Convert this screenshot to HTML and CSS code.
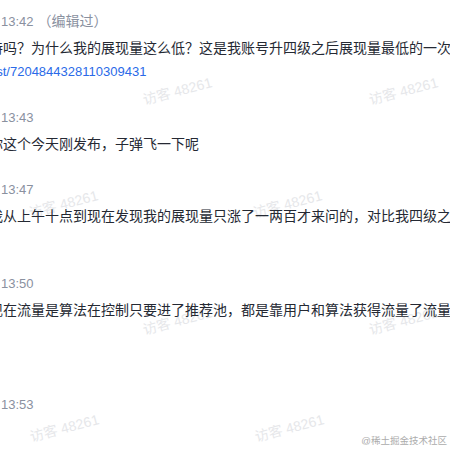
FILE: index.html
```html
<!DOCTYPE html>
<html>
<head>
    <meta charset="UTF-8">
    <meta name="viewport" content="width=device-width, initial-scale=1.0">
    <title>评论</title>
    <link rel="stylesheet" href="styles.css">
</head>
<body>
    <div class="watermarks">
        <span class="mark mark-a">访客 48261</span>
        <span class="mark mark-b">访客 48261</span>
        <span class="mark mark-c">访客 48261</span>
        <span class="mark mark-d">访客 48261</span>
        <span class="mark mark-e">访客 48261</span>
        <span class="mark mark-f">访客 48261</span>
        <span class="mark mark-g">访客 48261</span>
        <span class="mark mark-h">访客 48261</span>
    </div>

    <div class="thread">
        <div class="msg">
            <div class="msg-time">13:42<span class="edited">（编辑过）</span></div>
            <div class="msg-text">特吗？为什么我的展现量这么低？这是我账号升四级之后展现量最低的一次 <a class="link" href="#">https://juejin.cn/post/7204844328110309431</a></div>
        </div>

        <div class="msg">
            <div class="msg-time">13:43</div>
            <div class="msg-text">你这个今天刚发布，子弹飞一下呢</div>
        </div>

        <div class="msg">
            <div class="msg-time">13:47</div>
            <div class="msg-text">我从上午十点到现在发现我的展现量只涨了一两百才来问的，对比我四级之前的数据</div>
        </div>

        <div class="msg msg-gap-1">
            <div class="msg-time">13:50</div>
            <div class="msg-text">现在流量是算法在控制只要进了推荐池，都是靠用户和算法获得流量了流量就会高</div>
        </div>

        <div class="msg msg-gap-2">
            <div class="msg-time">13:53</div>
        </div>
    </div>

    <div class="site-mark">@稀土掘金技术社区</div>
</body>
</html>
```

FILE: styles.css
```css
html, body {
    overflow: hidden;
}
body {
    margin: 0;
    height: 450px;
    background: #fff;
    color: #252933;
    font-family: "Liberation Sans", "Noto Sans CJK SC", sans-serif;
    font-size: 14px;
}
.thread {
    position: relative;
    width: 566px;
    margin-left: -11px;
    padding-top: 11px;
}
.msg {
    margin-top: 25px;
}
.msg:first-child {
    margin-top: 0;
}
.msg-gap-1 {
    margin-top: 47px;
}
.msg-gap-2 {
    margin-top: 74px;
}
.msg-time {
    padding-left: 12px;
    line-height: 20px;
    font-size: 13px;
    color: #8a919f;
}
.edited {
    margin-left: 4px;
    font-size: 14px;
}
.msg-text {
    margin-top: 5px;
    line-height: 22px;
    word-break: break-all;
}
.link {
    font-size: 13px;
    color: #2a6ae8;
    text-decoration: none;
}

/* watermark layer */
.watermarks {
    position: absolute;
    top: 0;
    left: 0;
    width: 450px;
    height: 450px;
    pointer-events: none;
}
.mark {
    position: absolute;
    line-height: 20px;
    white-space: nowrap;
    font-size: 14px;
    color: #e6e7ea;
    transform: rotate(-15deg);
}
.mark-a { left: 142px; top: 81px; }
.mark-b { left: 368px; top: 81px; }
.mark-c { left: 28px; top: 194px; }
.mark-d { left: 252px; top: 194px; }
.mark-e { left: 142px; top: 311px; }
.mark-f { left: 368px; top: 311px; }
.mark-g { left: 29px; top: 418px; }
.mark-h { left: 254px; top: 418px; }

.site-mark {
    position: absolute;
    right: 3px;
    bottom: 3px;
    line-height: 12px;
    font-size: 9.5px;
    color: #acacac;
}
```
